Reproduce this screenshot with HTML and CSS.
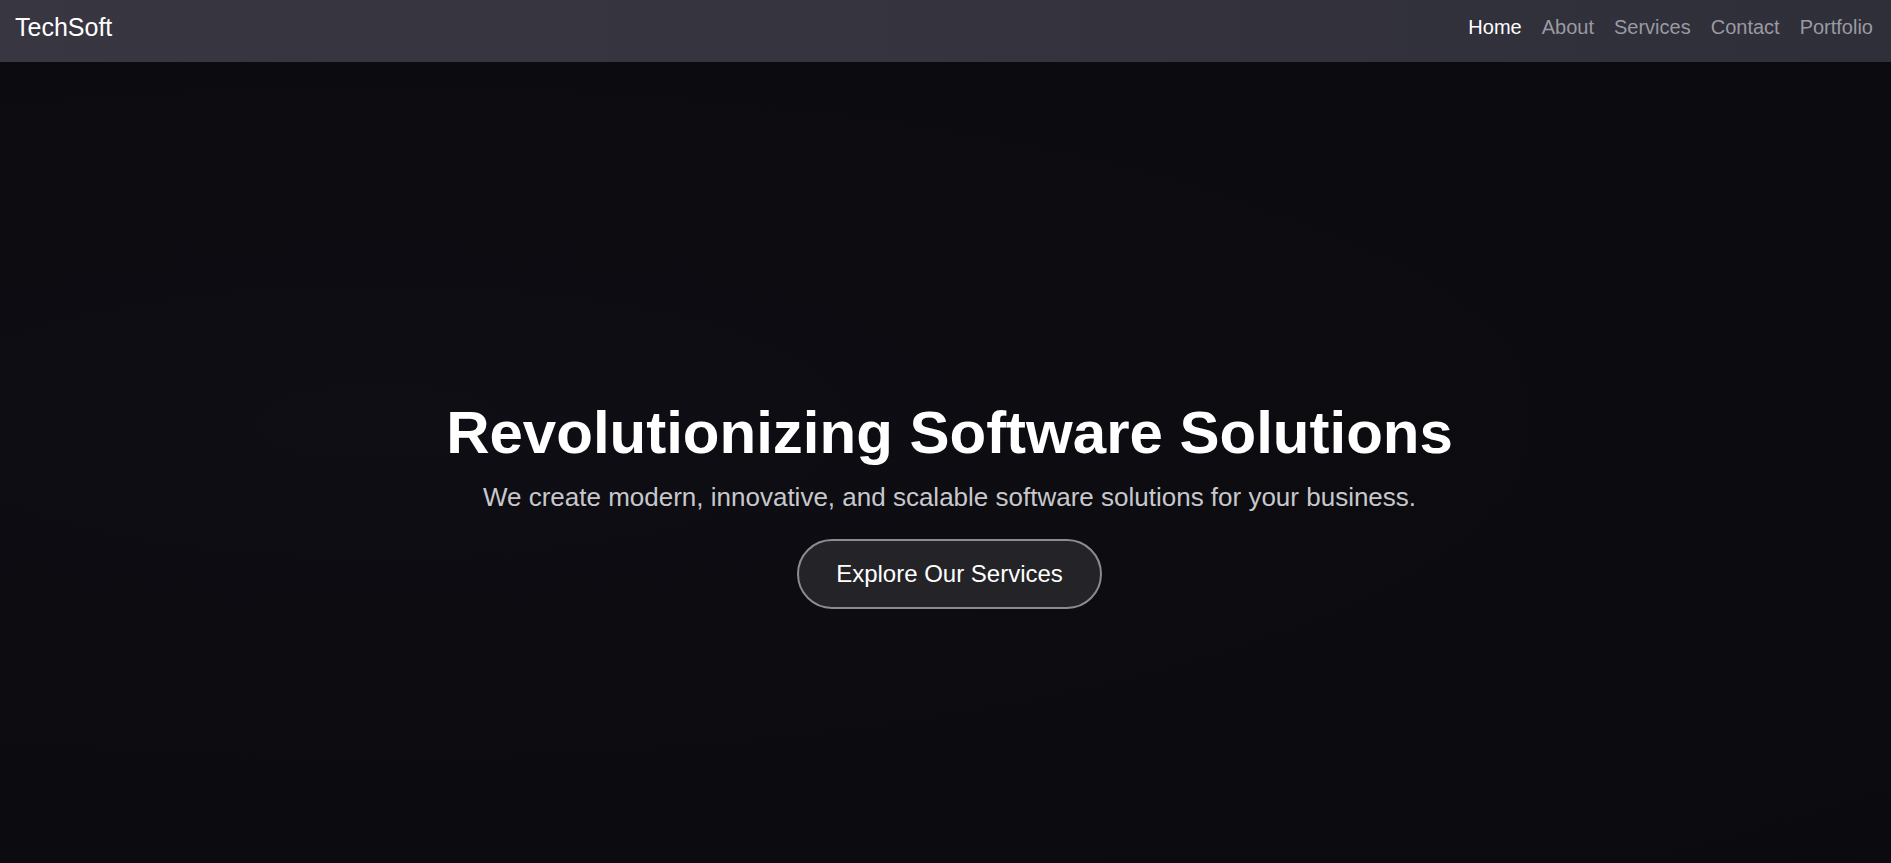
FILE: index.html
```html
<!DOCTYPE html>
<html lang="en">
<head>
<meta charset="utf-8">
<title>TechSoft</title>
<link rel="stylesheet" href="styles.css">
</head>
<body>
<header class="navbar">
  <a class="logo" href="#">TechSoft</a>
  <nav class="nav-links">
    <a class="nav-link active" href="#">Home</a>
    <a class="nav-link" href="#">About</a>
    <a class="nav-link" href="#">Services</a>
    <a class="nav-link" href="#">Contact</a>
    <a class="nav-link" href="#">Portfolio</a>
  </nav>
</header>
<main class="hero">
  <h1 class="hero-title">Revolutionizing Software Solutions</h1>
  <p class="hero-subtitle">We create modern, innovative, and scalable software solutions for your business.</p>
  <a class="hero-button" href="#">Explore Our Services</a>
</main>
</body>
</html>
```

FILE: styles.css
```css
* { box-sizing: border-box; }
html, body {
  margin: 0;
  padding: 0;
  height: 100%;
  overflow: hidden;
}
body {
  font-family: "Liberation Sans", Arial, sans-serif;
  background: #0b0b10;
  color: #fff;
}
.navbar {
  height: 62px;
  display: flex;
  align-items: center;
  justify-content: space-between;
  padding: 0 18px 0 15px;
  background: linear-gradient(90deg, #373641 0%, #34333e 50%, #2f2f3a 100%);
}
.logo {
  color: #fff;
  text-decoration: none;
  font-size: 25px;
  margin-top: -7px;
}
.nav-links {
  display: flex;
  gap: 20px;
  margin-top: -7px;
}
.nav-link {
  color: #9a9aa2;
  text-decoration: none;
  font-size: 20px;
}
.nav-link.active { color: #fff; }
.hero {
  height: calc(100vh - 62px);
  padding: 81px 0 0 8px;
  display: flex;
  flex-direction: column;
  align-items: center;
  justify-content: center;
  background: radial-gradient(ellipse at 20% 45%, #0e0e14 0%, #0b0b10 55%, #0a0a0f 100%);
}
.hero-title {
  margin: 0;
  font-size: 60px;
  font-weight: bold;
  color: #fff;
}
.hero-subtitle {
  margin: 15px 0 26px;
  font-size: 26px;
  color: #c8c8cc;
}
.hero-button {
  display: inline-block;
  padding: 19px 37px;
  font-size: 24px;
  color: #fff;
  text-decoration: none;
  background: #232328;
  border: 2px solid #8b8b91;
  border-radius: 40px;
}
```
